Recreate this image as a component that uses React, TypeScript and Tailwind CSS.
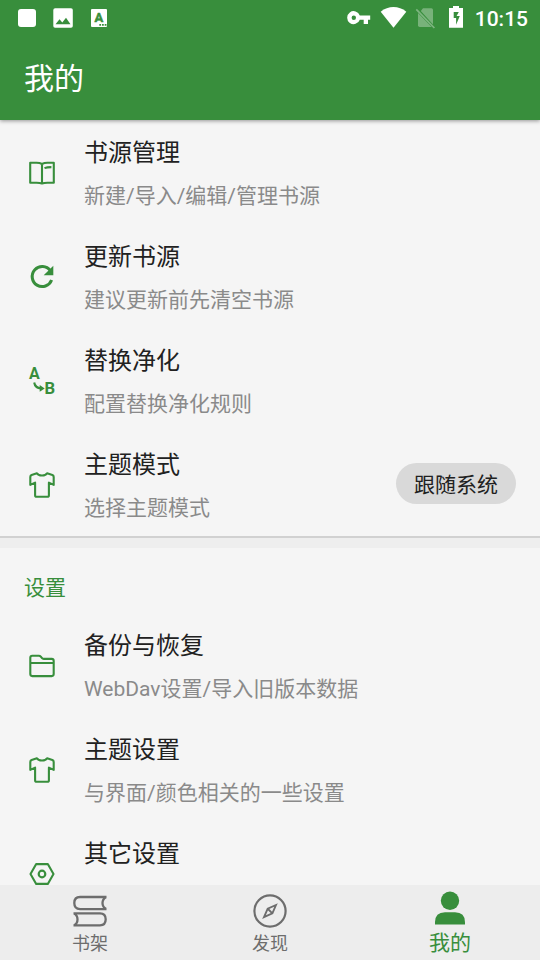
import type { ReactNode } from "react";

interface Preference {
  title: string;
  summary?: string;
  icon: ReactNode;
  value?: string;
}

function LineIcon({ children }: { children: ReactNode }) {
  return (
    <svg
      viewBox="0 0 36 36"
      className="size-9 shrink-0"
      fill="none"
      stroke="currentColor"
      strokeWidth="2.1"
      strokeLinejoin="round"
    >
      {children}
    </svg>
  );
}

const bookIcon = (
  <LineIcon>
    <path d="M6.2 8.8h6.3c2.2 0 4 .4 5.5 1.2 1.5-.8 3.3-1.2 5.5-1.2h6.3v19.9h-6.3c-2.2 0-4 .2-5.5.8-1.5-.6-3.300-.8-5.500-.8H6.2ZM18 10v19.2" />
    <path d="M20.5 14.1c1.7-.7 3.800-1 6.900-1" />
  </LineIcon>
);

const refreshIcon = (
  <LineIcon>
    <path d="M26.3 12.7A10 10 0 1 0 27.6 22" strokeWidth="3" />
    <path d="M29.3 7.7v9.6h-9.6Z" fill="currentColor" stroke="none" />
  </LineIcon>
);

const replaceIcon = (
  <LineIcon>
    <g fill="currentColor" stroke="none" fontFamily="Roboto, sans-serif" fontWeight="700" fontSize="16">
      <text x="5" y="17.2">A</text>
      <text x="20.6" y="32" textLength="10.6" lengthAdjust="spacingAndGlyphs">B</text>
      <path d="m15.7 23 5 3.4-5 3.4Z" />
    </g>
    <path d="M10.2 20.500c.5 3.400 2.500 5.600 7 5.900" />
  </LineIcon>
);

const shirtIcon = (
  <LineIcon>
    <path d="M12.9 7.2c1.6 3 8.6 3 10.2 0l5.3 1.7q1.3.5 1.3 2v8l-4.8-2.3v12.6q0 1.6-1.6 1.6H12.7q-1.600 0-1.600-1.600V16.600l-4.800 2.300v-8q0-1.500 1.300-2Z" />
  </LineIcon>
);

const folderIcon = (
  <LineIcon>
    <path d="M6.3 10.7q0-2 2-2h6.5q1.2 0 2 1l1 1.2q.7 1 2 1h7.9q2 0 2 2v13.2q0 2-2 2H8.3q-2 0-2-2ZM6.3 16h23.4" />
  </LineIcon>
);

const hexIcon = (
  <LineIcon>
    <path d="M12.2 9.1h11.600L29.500 19l-5.700 9.900H12.200L6.500 19Z" />
    <circle cx="18" cy="19" r="3.3" strokeWidth="2.2" />
  </LineIcon>
);

const sourcePrefs: Preference[] = [
  { title: "书源管理", summary: "新建/导入/编辑/管理书源", icon: bookIcon },
  { title: "更新书源", summary: "建议更新前先清空书源", icon: refreshIcon },
  { title: "替换净化", summary: "配置替换净化规则", icon: replaceIcon },
  { title: "主题模式", summary: "选择主题模式", icon: shirtIcon, value: "跟随系统" },
];

const settingPrefs: Preference[] = [
  { title: "备份与恢复", summary: "WebDav设置/导入旧版本数据", icon: folderIcon },
  { title: "主题设置", summary: "与界面/颜色相关的一些设置", icon: shirtIcon },
  { title: "其它设置", icon: hexIcon },
];

function StatusBar() {
  return (
    <div className="flex h-9 items-center pl-[9px] pr-3">
      <svg viewBox="0 0 36 36" className="size-9" fill="#fff">
        <rect x="9" y="9" width="18" height="18" rx="3" />
      </svg>
      <svg viewBox="0 0 36 36" className="size-9" fill="#fff">
        <rect x="8.3" y="8.2" width="19.5" height="19.5" rx="1.8" />
        <path d="m10.500 24.300 4-5 2.800 3.200 3.700-4.700 4.500 6.500Z" fill="#388e3c" />
      </svg>
      <svg viewBox="0 0 36 36" className="size-9" fill="#fff">
        <rect x="10" y="9" width="16" height="18" rx="1" />
        <text
          x="13.6"
          y="22.2"
          fill="#388e3c"
          stroke="#388e3c"
          strokeWidth=".5"
          fontFamily="Roboto, sans-serif"
          fontWeight="700"
          fontSize="13"
        >
          A
        </text>
        <path d="M18.300 24h1.800v1.800h-1.800ZM21 24h1.800v1.800H21ZM23.700 24h1.800v1.800h-1.800Z" fill="#388e3c" />
      </svg>

      <div className="ml-auto flex items-center gap-[7px]">
        {/* vpn key */}
        <svg viewBox="0 0 28 36" className="h-9 w-7" fill="#fff">
          <path
            fillRule="evenodd"
            d="M14.800 15.500a6.500 6.500 0 1 0 0 4.300h3.900V24h4.300v-4.200h2.200v-4.300ZM8.800 20a2.200 2.200 0 1 1 0-4.400 2.200 2.200 0 0 1 0 4.400Z"
          />
        </svg>
        <svg viewBox="0 0 28 36" className="h-9 w-7" fill="#fff">
          <path d="M.7 11.700C4.500 8.700 9 7.100 13.500 7.100s9 1.600 12.800 4.600L13.500 27.800Z" />
        </svg>
        {/* no sim */}
        <svg viewBox="0 0 22 36" className="h-9 w-[22px]">
          <path d="M8 8.300h8.300q1.700 0 1.700 1.700v14.500L5.800 11Z" fill="#fff" fillOpacity=".32" />
          <path d="M3 13v12.300Q3 27 4.700 27h12Z" fill="#fff" fillOpacity=".32" />
          <path d="M1.300 9.300 19.400 28" stroke="#fff" strokeOpacity=".35" strokeWidth="1.7" />
        </svg>
        <svg viewBox="0 0 16 36" className="ml-1 h-9 w-4" fill="#fff">
          <path
            fillRule="evenodd"
            d="M5 6h6v2h4v19.800H1V8h4ZM5.700 12v6h2.400v6.800L11.800 16H8.600l2.200-4Z"
          />
        </svg>
        <span className="ml-1 pt-0.5 text-[21px] font-medium leading-[34px]">10:15</span>
      </div>
    </div>
  );
}

function PreferenceRow({ pref }: { pref: Preference }) {
  return (
    <div className="flex h-[104px] shrink-0 items-center gap-6 px-6">
      <span className="flex text-[#388e3c]">{pref.icon}</span>
      <div className="h-[82px] min-w-0 flex-1">
        <p className="text-2xl leading-[44px] text-[#212121]">{pref.title}</p>
        {pref.summary && <p className="text-[21px] leading-[42px] text-[#8a8a8a]">{pref.summary}</p>}
      </div>
      {pref.value && (
        <span className="mb-0.5 h-[41px] rounded-full bg-[#d9d9d9] px-[18px] pt-0.5 text-[21px] leading-[41px] text-[#212121]">
          {pref.value}
        </span>
      )}
    </div>
  );
}

function BottomNav() {
  return (
    <nav className="grid h-[75px] shrink-0 grid-cols-3 bg-[#ededed] text-lg text-[#6d6d6d]">
      <div className="flex flex-col items-center pt-2">
        <svg viewBox="0 0 36 36" className="size-9" fill="none" stroke="currentColor" strokeWidth="2.3">
          <path d="M34.500 4H8Q2.300 4 2.300 10T8 16.100h26.500M34 4.200q-3.500 1.800-3.500 5.900T34 15.900" />
          <path d="M1.500 20.300H28q5.700 0 5.700 6T28 32.400H1.500M2 20.500q3.500 1.800 3.500 5.900T2 32.200" />
        </svg>
        <span className="leading-[30px]">书架</span>
      </div>
      <div className="flex flex-col items-center pt-2">
        <svg viewBox="0 0 36 36" className="size-9" fill="none" stroke="currentColor" strokeWidth="2.2">
          <circle cx="18" cy="18" r="15.600" />
          <path d="m24 12-3.600 8.400-8.400 3.800 3.700-8.500ZM16 16l4.100 4.100" strokeWidth="1.9" />
        </svg>
        <span className="leading-[30px]">发现</span>
      </div>
      <div className="flex flex-col items-center pt-[5px] text-[21px] text-[#388e3c]">
        <svg viewBox="0 0 36 36" className="size-9" fill="currentColor">
          <circle cx="18" cy="10.700" r="9.200" />
          <path d="M3 34.500v-2.300Q3 22.200 13 22.200h10q10 0 10 10v2.300Z" />
        </svg>
        <span className="leading-[34px]">我的</span>
      </div>
    </nav>
  );
}

export default function App() {
  return (
    <div className="flex h-[960px] w-[540px] flex-col overflow-hidden bg-[#f5f5f5] font-[Roboto,'Noto_Sans_CJK_SC',sans-serif]">
      <header className="z-10 h-[120px] shrink-0 bg-[#388e3c] text-white shadow-[0_1px_4px_rgba(0,0,0,0.4)]">
        <StatusBar />
        <h1 className="px-6 text-[30px] leading-[86px]">我的</h1>
      </header>

      <main className="flex min-h-0 flex-1 flex-col overflow-hidden">
        {sourcePrefs.map(pref => (
          <PreferenceRow key={pref.title} pref={pref} />
        ))}
        <div className="h-3 shrink-0 border-t-2 border-[#d1d1d1] bg-[#eeeeee]" />
        <h2 className="h-[65px] shrink-0 px-6 pt-5 text-[21px] leading-10 text-[#388e3c]">设置</h2>
        {settingPrefs.map(pref => (
          <PreferenceRow key={pref.title} pref={pref} />
        ))}
      </main>

      <BottomNav />
    </div>
  );
}
